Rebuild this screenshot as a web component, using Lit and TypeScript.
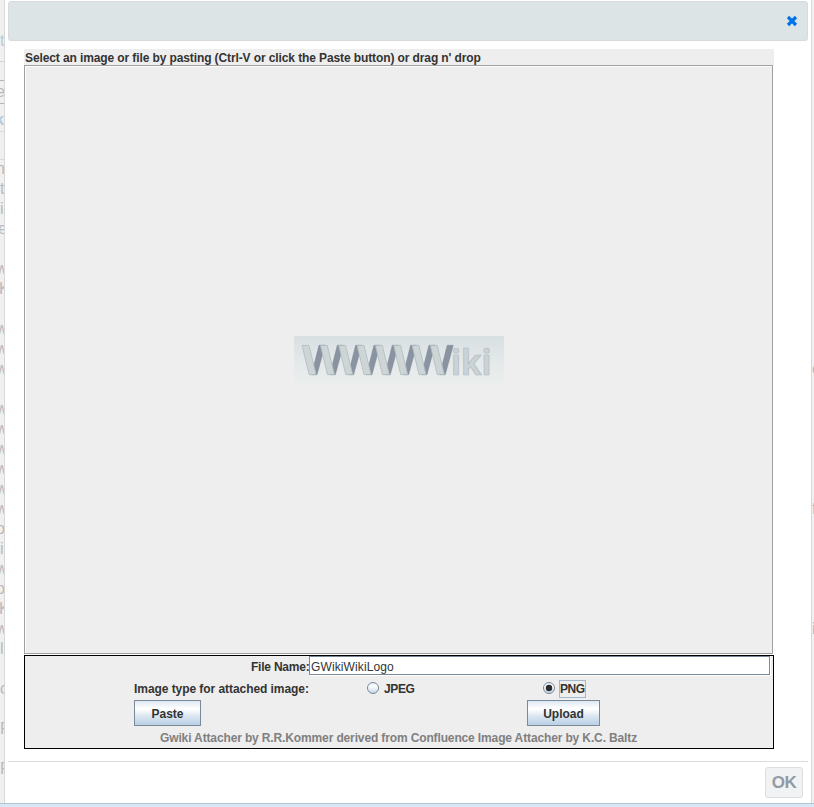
import { LitElement, html, css, svg } from "lit";
import { customElement, state } from "lit/decorators.js";

const PITCH = 18.32;
const BANDS = [0, 1, 2, 3, 4, 5, 6, 7];

@customElement("wiki-logo")
class WikiLogo extends LitElement {
  static styles = css`
    :host { display: block; width: 210px; height: 48px; }
    svg { display: block; }
    .dark { fill: #8993a1; stroke: #7c8794; stroke-width: 0.5; }
    .light { fill: #cdd5d7; stroke: #b0babd; stroke-width: 0.8; }
    .word {
      font: bold 36px "Open Sans", "Noto Sans", sans-serif;
      fill: #cbd3d6; stroke: #b0babd; stroke-width: 0.7;
    }
  `;
  render() {
    return html`<svg width="210" height="48" viewBox="0 0 210 48">
      <defs>
        <linearGradient id="sky" x1="0" y1="0" x2="0" y2="1">
          <stop offset="0" stop-color="#d9e0e2" />
          <stop offset="0.5" stop-color="#e3e8e9" />
          <stop offset="1" stop-color="#ebeeed" />
        </linearGradient>
      </defs>
      <rect width="210" height="48" fill="url(#sky)" />
      ${BANDS.map((i) => svg`<polygon class="dark" transform="translate(${8 + i * PITCH} 0)" points="17,9.3 23,9.3 15,38.7 9.5,38.7" />`)}
      ${BANDS.map((i) => svg`<polygon class="light" transform="translate(${8 + i * PITCH} 0)" points="0.1,9.4 7,9.4 14.1,38.6 7.1,38.6" />`)}
      <text class="word" x="157" y="38.7" textLength="40.5" lengthAdjust="spacingAndGlyphs">iki</text>
    </svg>`;
  }
}

type Line = [text: string, kind: string];
const W: Line = ["w", "shift"];
const GAP: Line = ["", ""];
const LEFT: Line[] = [
  ["", "l0"], ["", "l1"], ["to", "l2 blue"], ["", "l3"], ["e", "l4 shift"], ["k", "l5 blue bold far"], ["", "l6"],
  ["n", "shift"], ["t", ""], ["ic", ""], ["e", "near"], GAP, W, ["K", "far"], GAP,
  W, W, W, GAP, W, W, W, W, W, W, ["o", "shift"], ["i", ""], W, ["o", "shift"], ["K", "far"],
  W, ["ls", ""], GAP, ["c", ""], GAP, ["F", ""], GAP, ["F", ""],
];
const RIGHT: Record<number, string> = { 18: "e", 25: "f", 31: "i" };
const RIGHT_ROWS = Array.from({ length: 40 }, (_, i) => RIGHT[i] ?? "");

@customElement("app-root")
class AppRoot extends LitElement {
  @state() type = "PNG";

  static styles = css`
    :host {
      display: block; height: 807px; overflow: hidden; background: #d9e8f6;
      font: bold 12px/14px "Liberation Sans", Arial, sans-serif; color: #333;
    }
    * { box-sizing: border-box; }
    .page {
      display: grid; grid-template-columns: 4px 808px 2px; height: 804px;
      background: #f0f0f0; border-bottom: 1px solid #b5c3cf;
    }
    .edge { overflow: hidden; height: 803px; }
    .line {
      height: 20px; font-size: 16px; line-height: 17px; font-weight: normal;
      color: #b9b9bb; white-space: nowrap;
    }
    .shift { text-indent: -4px; }
    .near { text-indent: -2px; }
    .far { text-indent: -1px; }
    .l1 { height: 12px; }
    .l2 { height: 29px; }
    .l3 { height: 20px; border-top: 1px solid #d4d4d4; border-bottom: 1px solid #b4b4b4; }
    .l4 { height: 23px; line-height: 21px; border-bottom: 1px solid #b4b4b4; }
    .l5 { height: 28px; line-height: 32px; border-bottom: 1px solid #dadada; text-indent: -5px; }
    .l6 { height: 28px; border-bottom: 1px solid #dadada; }
    .blue { color: #b4cbdc; }
    .bold { font-weight: bold; }
    .dialog {
      background: #fff; border: solid #d8d8d8; border-width: 0 1px;
      display: flex; flex-direction: column; padding: 1px 3px 0; height: 803px;
    }
    .head {
      height: 40px; flex: none; background: #dce4e6; border: 1px solid #d8dbdb;
      border-radius: 3px; display: flex; align-items: center;
      justify-content: flex-end; padding-right: 9px;
    }
    .head svg { display: block; }
    .panel { width: 750px; height: 700px; margin: 8px 0 0 16px; flex: none; background: #eee; }
    .hint { height: 16px; padding: 2px 0 0 1px; letter-spacing: -0.108px; white-space: nowrap; }
    .drop {
      height: 589px; width: 749px; border: 1px solid #a0a0a0;
      box-shadow: inset 1px 1px #fff, 1px 1px #fff;
      display: flex; align-items: center; justify-content: center; margin-bottom: 1px;
    }
    .form { height: 94px; border: 1px solid #000; }
    .row { display: flex; align-items: center; }
    .name { height: 20px; padding-left: 226px; }
    .name label { width: 58px; flex: none; margin-top: 1px; white-space: nowrap; letter-spacing: -0.22px; }
    .field-box {
      width: 461px; height: 19px; margin-bottom: 1px; border: 1px solid #7a8a99; background: #fff;
      box-shadow: 1px 1px #fff; font: 12px/15px "Liberation Sans", Arial, sans-serif;
      color: #333; padding: 2px 0 0 1px; outline: none; border-radius: 0; letter-spacing: 0.12px;
    }
    .types { height: 23px; padding-left: 109px; margin-top: 1px; }
    .types .caption { width: 233px; white-space: nowrap; letter-spacing: -0.06px; }
    .option { display: flex; align-items: center; letter-spacing: -0.4px; }
    .option.first { width: 176px; }
    .option svg { display: block; margin-right: 3px; }
    .option span { padding: 2px 0 0; border: 1px solid transparent; height: 18px; line-height: 13px; }
    .option .focus { border-color: #a3b8cc; }
    .buttons { height: 26px; padding-left: 109px; gap: 326px; }
    button {
      height: 26px; width: 67px; padding: 1px 0 0; font: inherit; color: #333; border: 1px solid #7a8a99;
      background: linear-gradient(#dde8f3, #fff 30%, #fff 34%, #dce7f1 62%, #b8cfe5);
    }
    .upload { width: 73px; }
    .credit { color: #808080; padding: 5px 0 0 135px; letter-spacing: -0.134px; white-space: nowrap; }
    .foot {
      margin-top: 12px; border-top: 1px solid #dcdcdc; display: flex;
      justify-content: flex-end; padding: 5px 5px 0 0;
    }
    .ok {
      width: 38px; height: 31px; padding: 0; border: 1px solid #dcdedf; border-radius: 3px;
      background: #f1f2f4; font-size: 17px; line-height: 28px; color: #919ba3; letter-spacing: -0.5px;
    }
  `;

  private radio(name: string) {
    const on = this.type === name;
    return html`<div class="option ${name === "JPEG" ? "first" : ""}" @click=${() => (this.type = name)}>
      <svg width="13" height="13" viewBox="0 0 13 13">
        <defs><linearGradient id="ball" x1="0" y1="0" x2="0" y2="1">
          <stop offset="0" stop-color="#e3ecf5" /><stop offset="0.35" stop-color="#fff" />
          <stop offset="1" stop-color="#bdd1e5" /></linearGradient></defs>
        <circle cx="6" cy="6" r="5.5" fill="url(#ball)" stroke="#7a8a99" />
        ${on ? svg`<circle cx="6" cy="6" r="3.2" fill="#2b2b2b" />` : ""}
      </svg>
      <span class="${on ? "focus" : ""}">${name}</span>
    </div>`;
  }

  render() {
    return html`<div class="page">
      <div class="edge">${LEFT.map(([text, kind]) => html`<div class="line ${kind}">${text}</div>`)}</div>
      <div class="dialog">
        <div class="head">
          <svg width="12" height="12" viewBox="0 0 12 12">
            <path d="M2 2 10 10M10 2 2 10" stroke="#0073ea" stroke-width="3.2" />
          </svg>
        </div>
        <div class="panel">
          <div class="hint">Select an image or file by pasting (Ctrl-V or click the Paste button) or drag n' drop</div>
          <div class="drop"><wiki-logo></wiki-logo></div>
          <div class="form">
            <div class="row name"><label>File Name:</label><input class="field-box" .value=${"GWikiWikiLogo"} /></div>
            <div class="row types"><span class="caption">Image type for attached image:</span>${this.radio("JPEG")}${this.radio("PNG")}</div>
            <div class="row buttons"><button>Paste</button><button class="upload">Upload</button></div>
            <div class="credit">Gwiki Attacher by R.R.Kommer derived from Confluence Image Attacher by K.C. Baltz</div>
          </div>
        </div>
        <div class="foot"><button class="ok">OK</button></div>
      </div>
      <div class="edge">${RIGHT_ROWS.map((t) => html`<div class="line">${t}</div>`)}</div>
    </div>`;
  }
}
